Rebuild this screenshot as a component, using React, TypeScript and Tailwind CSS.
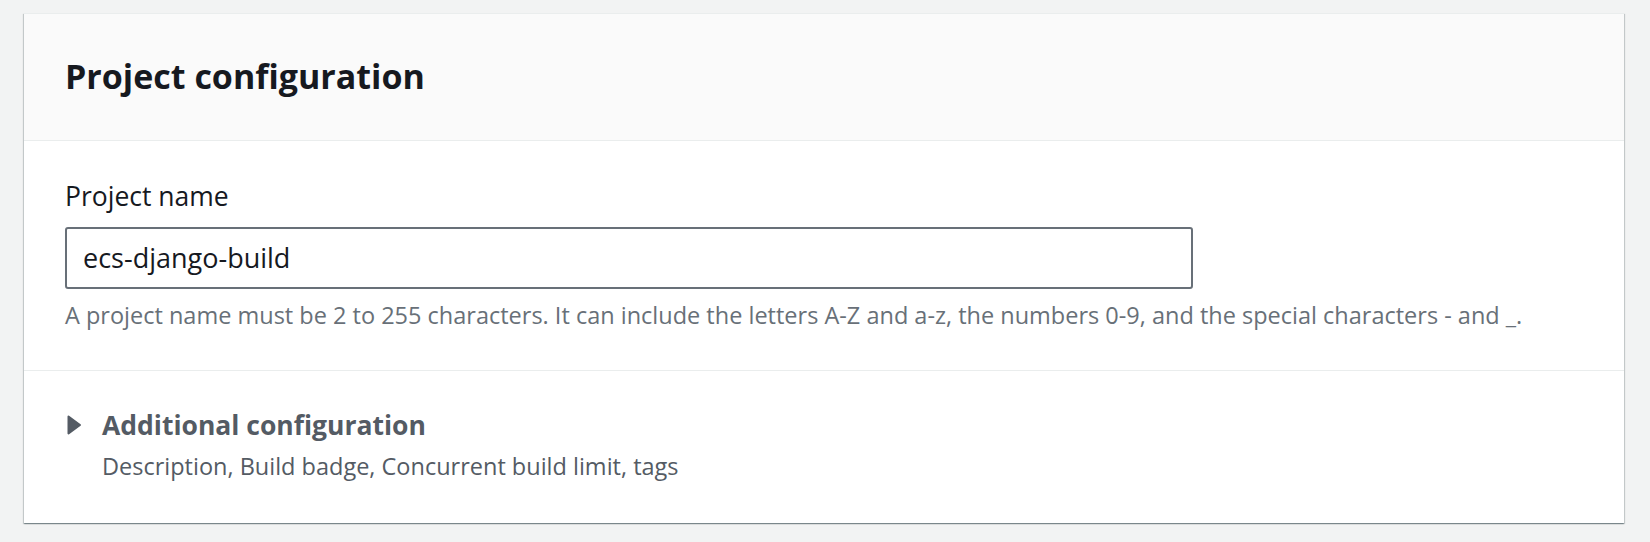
import React from 'react';

/* Project configuration panel */

const sans = "font-['Open_Sans','Noto_Sans',sans-serif]";

function CaretRight() {
  return (
    <svg width="16" height="20" viewBox="0 0 16 20" className="shrink-0">
      <polygon
        points="2.5,1.5 14,10 2.5,18.5"
        fill="#545b64"
        stroke="#545b64"
        strokeWidth="2"
        strokeLinejoin="round"
      />
    </svg>
  );
}

export default function App() {
  return (
    <div className={`min-h-[542px] w-full bg-[#f2f3f3] pl-[24px] pr-[26px] pt-[13px] ${sans}`}>
      <div className="border-t border-[#eaeded] bg-white shadow-[0_1px_1px_0_rgba(0,28,36,0.3),1px_1px_1px_0_rgba(0,28,36,0.15),-1px_1px_1px_0_rgba(0,28,36,0.15)]">
        {/* Header */}
        <div className="flex h-[127px] items-center border-b border-[#eaeded] bg-[#fafafa] pl-[41px] pb-[2px]">
          <h2 className="text-[34px] font-bold leading-[40px] text-[#16191f]">Project configuration</h2>
        </div>

        {/* Project name field */}
        <div className="border-b border-[#eaeded] pl-[41px] pt-[38px] pb-[40px]">
          <label className="block text-[26.5px] leading-[34px] text-[#16191f]">Project name</label>
          <div className="mt-[14px] flex h-[62px] w-[1128px] items-center rounded-[3px] border-2 border-[#687078] pl-[16px]">
            <span className="text-[27px] leading-[34px] text-[#16191f]">ecs-django-build</span>
          </div>
          <p className="mt-[11px] text-[23.5px] leading-[30px] text-[#687078]">
            A project name must be 2 to 255 characters. It can include the letters A-Z and a-z, the numbers 0-9, and the special characters - and _.
          </p>
        </div>

        {/* Additional configuration expander */}
        <div className="pl-[42px] pt-[41px] pb-[44px]">
          <div className="flex items-center gap-[20px]">
            <CaretRight />
            <span className="text-[26.5px] font-bold leading-[26px] text-[#545b64]">Additional configuration</span>
          </div>
          <p className="mt-[15px] pl-[36px] text-[23.5px] leading-[26px] text-[#545b64]">
            Description, Build badge, Concurrent build limit, tags
          </p>
        </div>
      </div>
    </div>
  );
}
